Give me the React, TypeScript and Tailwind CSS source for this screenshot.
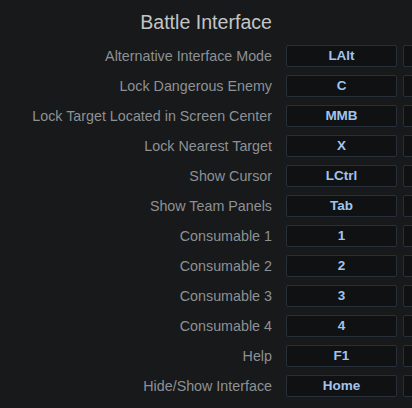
import React from "react";

const rows: [string, string][] = [
  ["Alternative Interface Mode", "LAlt"],
  ["Lock Dangerous Enemy", "C"],
  ["Lock Target Located in Screen Center", "MMB"],
  ["Lock Nearest Target", "X"],
  ["Show Cursor", "LCtrl"],
  ["Show Team Panels", "Tab"],
  ["Consumable 1", "1"],
  ["Consumable 2", "2"],
  ["Consumable 3", "3"],
  ["Consumable 4", "4"],
  ["Help", "F1"],
  ["Hide/Show Interface", "Home"],
];

export default function App() {
  return (
    <div
      className="w-[412px] h-[408px] overflow-hidden bg-[#17191b]"
      style={{ fontFamily: '"Liberation Sans", Arial, sans-serif' }}
    >
      <div className="pt-[10px] w-[272px] text-right text-[19.6px] leading-[24px] text-[#c4c5c6]">
        Battle Interface
      </div>
      <div className="mt-[11px] flex flex-col gap-[8px]">
        {rows.map(([label, key]) => (
          <div key={label} className="flex h-[22px] items-center">
            <div className="w-[272px] shrink-0 text-right text-[14.3px] leading-[22px] text-[#8e9194] whitespace-nowrap">
              {label}
            </div>
            <div className="ml-[14px] w-[111px] h-[22px] shrink-0 rounded-[2px] border border-[#27303a] bg-[#0f1113] flex items-center justify-center text-[13.5px] font-bold text-[#a0c4ee]">
              {key}
            </div>
            <div className="ml-[6px] w-[111px] h-[22px] shrink-0 rounded-[2px] border border-[#27303a] bg-[#0f1113]" />
          </div>
        ))}
      </div>
    </div>
  );
}
